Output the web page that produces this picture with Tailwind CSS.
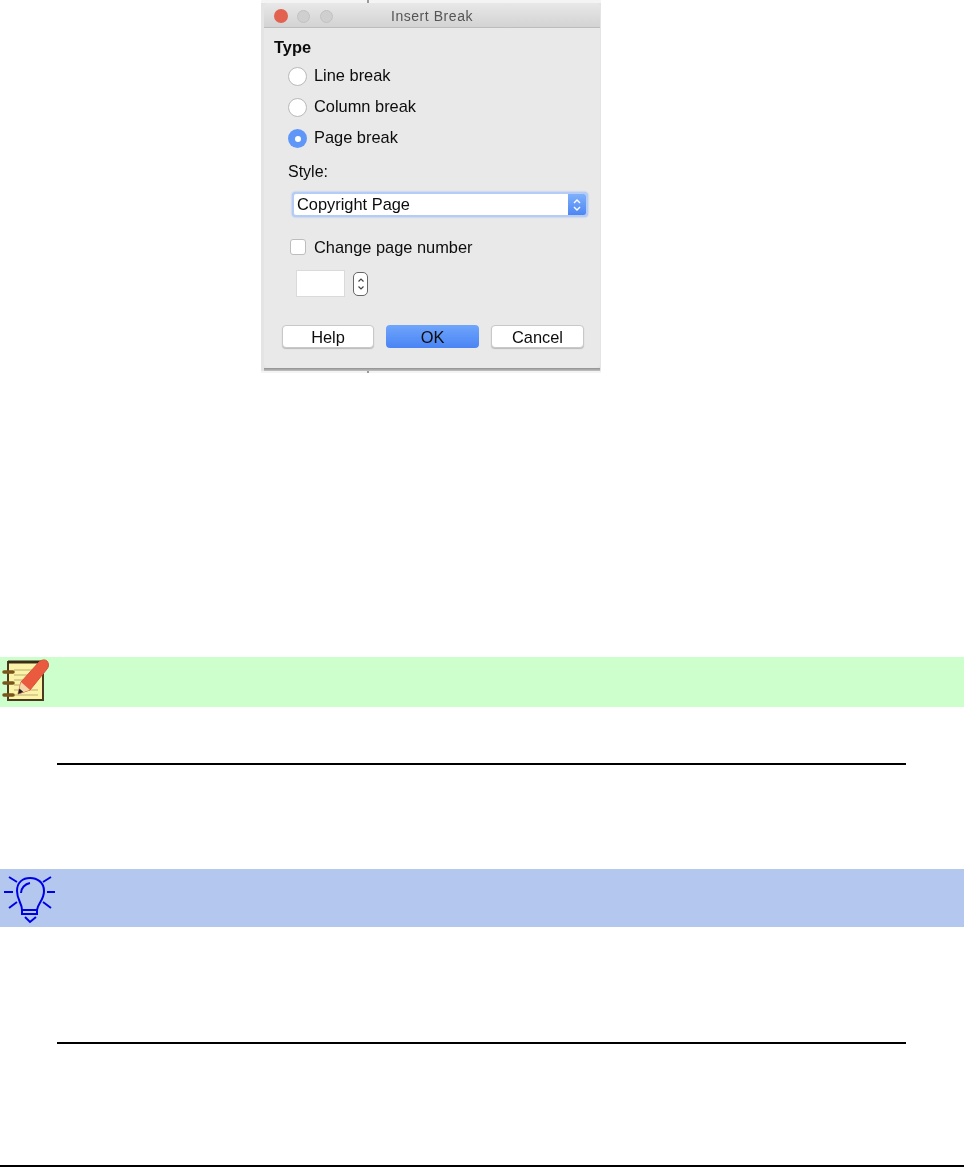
<!DOCTYPE html>
<html>
<head>
<script src="https://cdn.jsdelivr.net/npm/@tailwindcss/browser@4"></script>
</head>
<body class="bg-white font-['Liberation_Sans',sans-serif]">
<div class="w-[964px] h-[1167px] flex flex-col overflow-hidden">
  <!-- screenshot of dialog -->
  <div class="ml-[261px] w-[340px] h-[373px] shrink-0 flex flex-col blur-[0.4px] bg-[#e4e4e4]">
    <div class="h-[3px] shrink-0 bg-[#f4f4f4] pl-[106px]"><div class="w-[2px] h-full bg-[#9a9a9a]"></div></div>
    <div class="flex pl-[3px] h-[365px] shrink-0">
      <div class="w-[336px] h-[365px] bg-[#e9e9e9] rounded-[5px] flex flex-col text-[#0c0c0c] text-[16.4px] leading-[18px]">
        <div class="h-[25px] shrink-0 rounded-t-[5px] bg-gradient-to-b from-[#e8e8e8] to-[#d3d3d3] border-b border-[#bdbdbd] flex items-center pl-[10px] pt-[2px] relative">
          <span class="w-[14px] h-[14px] rounded-full bg-[#e2614f]"></span>
          <span class="w-[13px] h-[13px] rounded-full bg-[#cfcfcf] border border-[#c2c2c2] ml-[9px]"></span>
          <span class="w-[13px] h-[13px] rounded-full bg-[#cfcfcf] border border-[#c2c2c2] ml-[10px]"></span>
          <span class="absolute inset-x-0 text-center text-[14px] tracking-[0.55px] text-[#555]">Insert Break</span>
        </div>
        <div class="flex-1 pl-[10px] flex flex-col">
          <div class="font-bold mt-[10px] h-[18px]">Type</div>
          <div class="flex items-center h-[18px] mt-[10px] pl-[14px] gap-[7px]">
            <span class="w-[19px] h-[19px] rounded-full bg-white border border-[#b9b9b9] mt-[3px]"></span><span>Line break</span>
          </div>
          <div class="flex items-center h-[18px] mt-[13px] pl-[14px] gap-[7px]">
            <span class="w-[19px] h-[19px] rounded-full bg-white border border-[#b9b9b9] mt-[3px]"></span><span>Column break</span>
          </div>
          <div class="flex items-center h-[18px] mt-[13px] pl-[14px] gap-[7px]">
            <span class="w-[19px] h-[19px] rounded-full bg-[#5f97f8] mt-[3px] flex items-center justify-center"><span class="w-[6px] h-[6px] rounded-full bg-white"></span></span><span>Page break</span>
          </div>
          <div class="mt-[17px] ml-[14px] h-[18px] text-[16px]">Style:</div>
          <div class="mt-[11px] ml-[18px] w-[296px] h-[25px] rounded-[4px] bg-white border-2 border-[#b5cdf6] shadow-[0_0_2px_#8fb4f5] flex items-center justify-between overflow-hidden">
            <span class="pl-[3px] -mt-[2px]">Copyright Page</span>
            <span class="w-[18px] h-full bg-gradient-to-b from-[#7fb0fb] to-[#4d86f2] flex items-center justify-center">
              <svg width="10" height="16" viewBox="0 0 10 16" fill="none" stroke="#fff" stroke-width="1.4"><path d="M2 6l3-3 3 3M2 10l3 3 3-3"/></svg>
            </span>
          </div>
          <div class="flex items-center h-[18px] mt-[21px] pl-[16px] gap-[8px]">
            <span class="w-[16px] h-[16px] rounded-[3px] bg-white border border-[#bdbdbd]"></span><span>Change page number</span>
          </div>
          <div class="flex items-center mt-[14px] ml-[22px] gap-[8px]">
            <span class="w-[49px] h-[27px] bg-white border border-[#dadada]"></span>
            <span class="w-[15px] h-[24px] rounded-[5px] bg-white border border-[#666] flex items-center justify-center">
              <svg width="10" height="18" viewBox="0 0 10 18" fill="none" stroke="#444" stroke-width="1.2"><path d="M2.5 6.5L5 4l2.5 2.5M2.5 11.5L5 14l2.5-2.5"/></svg>
            </span>
          </div>
          <div class="flex mt-[28px] ml-[8px]">
            <span class="w-[92px] h-[23px] rounded-[4px] bg-white border border-[#c8c8c8] shadow-[0_1px_1px_#bbbbbb] flex items-center justify-center">Help</span>
            <span class="w-[93px] h-[23px] ml-[12px] rounded-[4px] bg-gradient-to-b from-[#6fa5fb] to-[#4a84f4] flex items-center justify-center">OK</span>
            <span class="w-[93px] h-[23px] ml-[12px] rounded-[4px] bg-white border border-[#c8c8c8] shadow-[0_1px_1px_#bbbbbb] flex items-center justify-center">Cancel</span>
          </div>
        </div>
      </div>
    </div>
    <div class="h-[3px] shrink-0 ml-[3px] w-[336px] bg-gradient-to-b from-[#8f8f8f] to-[#c4c4c4]"></div>
    <div class="h-[2px] shrink-0 bg-[#f4f4f4] pl-[106px]"><div class="w-[2px] h-full bg-[#9a9a9a]"></div></div>
  </div>
  <!-- note band -->
  <div class="mt-[284px] h-[50px] shrink-0 bg-[#ccffcc] pl-[2px] flex items-center blur-[0.5px]">
    <svg width="48" height="46" viewBox="0 0 48 46">
      <rect x="6" y="3" width="35" height="38" fill="#fbf3a8" stroke="#4a3a20" stroke-width="2"/>
      <path d="M6 3h35" stroke="#3a2c14" stroke-width="3"/>
      <path d="M12 11h24M12 16h24M12 21h12M12 26h8M12 31h24M12 36h24" stroke="#cfc483" stroke-width="1.5"/>
      <g stroke="#7a5418" stroke-width="3.5" stroke-linecap="round"><path d="M2 13h9M2 24h9M2 36h9"/></g>
      <path d="M16 35l3-12L37 3c2-2 6-3 8-1s2 6 0 8L28 31z" fill="#ea5a3e" stroke="#d8523a"/>
      <path d="M16 35l3-12 9 8z" fill="#f3d7a8"/>
      <path d="M16 35l1.4-5.5 4 3.5z" fill="#222"/>
    </svg>
  </div>
  <div class="mt-[56px] ml-[57px] w-[849px] h-[2px] bg-black shrink-0"></div>
  <!-- tip band -->
  <div class="mt-[104px] h-[58px] shrink-0 bg-[#b4c7ee]">
    <svg width="60" height="58" viewBox="0 0 60 58" fill="none" stroke="#0000e6" stroke-width="2">
      <path d="M22 41C22 34 17 31 17 22C17 13 23 9 30 9C37 9 44 13 44 22C44 31 38 34 37 41"/>
      <path d="M21 24C21 19 25 15 30 14"/>
      <rect x="22" y="41" width="15" height="4"/>
      <path d="M25 48l5 5 6-5"/>
      <path d="M9 8l8 5M51 8l-8 5M4 23h9M47 23h8M9 39l8-6M51 39l-8-6"/>
    </svg>
  </div>
  <div class="mt-[115px] ml-[57px] w-[849px] h-[2px] bg-black shrink-0"></div>
  <div class="mt-[121px] h-[2px] bg-black shrink-0"></div>
</div>
</body>
</html>
